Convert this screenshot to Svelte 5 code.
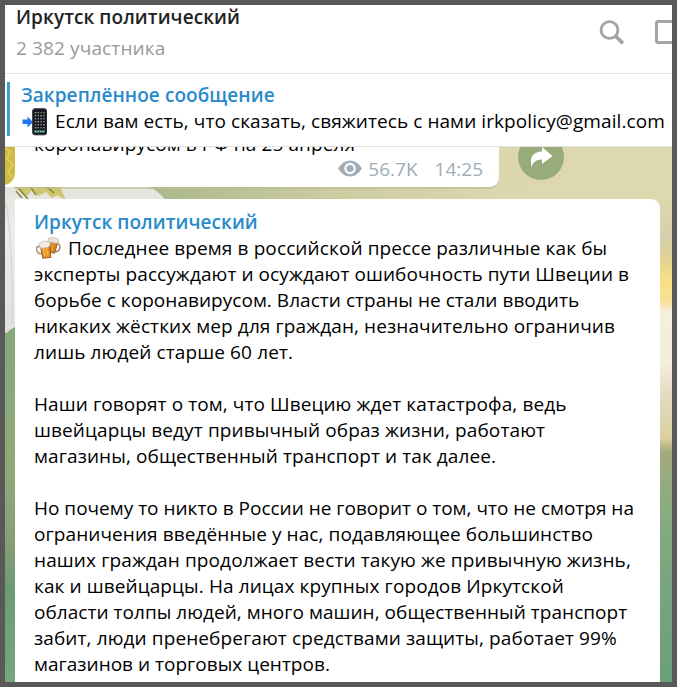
<script lang="ts">
	const channel = 'Иркутск политический';

	interface Line {
		text: string;
		tracking: number;
	}

	const paragraphs: Line[][] = [
		[
			{ text: 'Последнее время в российской прессе различные как бы', tracking: 0.115 },
			{ text: 'эксперты рассуждают и осуждают ошибочность пути Швеции в', tracking: 0.08 },
			{ text: 'борьбе с коронавирусом. Власти страны не стали вводить', tracking: 0.04 },
			{ text: 'никаких жёстких мер для граждан, незначительно ограничив', tracking: 0.1 },
			{ text: 'лишь людей старше 60 лет.', tracking: 0.12 }
		],
		[
			{ text: 'Наши говорят о том, что Швецию ждет катастрофа, ведь', tracking: 0.09 },
			{ text: 'швейцарцы ведут привычный образ жизни, работают', tracking: 0.12 },
			{ text: 'магазины, общественный транспорт и так далее.', tracking: 0.1 }
		],
		[
			{ text: 'Но почему то никто в России не говорит о том, что не смотря на', tracking: 0 },
			{ text: 'ограничения введённые у нас, подавляющее большинство', tracking: 0.09 },
			{ text: 'наших граждан продолжает вести такую же привычную жизнь,', tracking: 0.12 },
			{ text: 'как и швейцарцы. На лицах крупных городов Иркутской', tracking: 0.1 },
			{ text: 'области толпы людей, много машин, общественный транспорт', tracking: 0.04 },
			{ text: 'забит, люди пренебрегают средствами защиты, работает 99%', tracking: 0.11 },
			{ text: 'магазинов и торговых центров.', tracking: 0.02 }
		]
	];

	const appDots = [0, 1, 2, 3, 4, 5].flatMap((row) =>
		[0, 1, 2, 3].map((col) => ({
			x: 13.8 + col * 2.8,
			y: 4 + row * 3,
			color: ['#d5a64d', '#629bd0', '#c45c65', '#79b880', '#a974c5'][(row * 3 + col) % 5]
		}))
	);
</script>

<div class="window">
	<header class="header">
		<div>
			<h1 class="title">{channel}</h1>
			<p class="members">2 382 участника</p>
		</div>
		<div class="actions">
			<svg width="26" height="26" viewBox="0 0 26 26" fill="none" stroke="#a5a5a5">
				<circle cx="10.5" cy="10" r="8.4" stroke-width="2.9" />
				<path d="M16.8 16.3L24 23.3" stroke-width="3.7" />
			</svg>
			<svg width="17" height="25" viewBox="0 0 17 25" fill="none" stroke="#a5a5a5" stroke-width="3">
				<path d="M20 1.5H3Q1.5 1.5 1.5 3V21Q1.5 22.5 3 22.5H20" />
			</svg>
		</div>
	</header>

	<section class="pinned">
		<div class="pinned-bar"></div>
		<div class="pinned-content">
			<div class="pinned-title">Закреплённое сообщение</div>
			<div class="pinned-text">
				<svg width="26" height="28" viewBox="0 0 26 28">
					<path d="M1.5 11.5h5V8.5l5.5 5.5-5.5 5.5v-3.5h-5z" fill="#2375ed" />
					<rect x="11.7" y=".8" width="13.8" height="26" rx="2" fill="#161b22" stroke="#252b31" />
					{#each appDots as dot}
						<rect x={dot.x} y={dot.y} width="1.4" height="1.4" fill={dot.color} />
					{/each}
					<rect x="13" y="22" width="11" height="3" fill="#326653" />
					<path d="M14 23.5h9" stroke="#91dfb4" stroke-dasharray="1.5 1" />
				</svg>
				<span class="pinned-line">Если вам есть, что сказать, свяжитесь с нами irkpolicy@gmail.com</span>
			</div>
		</div>
	</section>

	<main class="chat">
		<svg class="wallpaper" viewBox="0 0 667 535" preserveAspectRatio="none">
			<defs>
				<linearGradient id="sky">
					<stop offset=".2" stop-color="#a9b68c" />
					<stop offset=".5" stop-color="#cdcda0" />
					<stop offset=".75" stop-color="#ddd7ae" />
					<stop offset="1" stop-color="#ded8af" />
				</linearGradient>
				<linearGradient id="left" x2="0" y2="1">
					<stop offset=".33" stop-color="#83a77b" />
					<stop offset=".58" stop-color="#91aa7a" />
					<stop offset=".73" stop-color="#899f75" />
					<stop offset=".82" stop-color="#6e9b76" />
					<stop offset="1" stop-color="#77a67d" />
				</linearGradient>
				<linearGradient id="right" gradientUnits="userSpaceOnUse" x1="0" y1="0" x2="0" y2="535">
					<stop offset=".1" stop-color="#ded8af" />
					<stop offset=".17" stop-color="#d5cfac" />
					<stop offset=".21" stop-color="#e1d394" />
					<stop offset=".25" stop-color="#f9df83" />
					<stop offset=".285" stop-color="#f8e092" />
					<stop offset=".31" stop-color="#f5efdf" />
					<stop offset=".4" stop-color="#f5eddd" />
					<stop offset=".46" stop-color="#e5dcc5" />
					<stop offset=".545" stop-color="#d9cf9f" />
					<stop offset=".57" stop-color="#a4aa7d" />
					<stop offset=".67" stop-color="#8aac81" />
					<stop offset=".82" stop-color="#77a57f" />
					<stop offset="1" stop-color="#6ba076" />
				</linearGradient>
				<linearGradient id="petal" x2="0" y2="1">
					<stop offset="0" stop-color="#e4e3dc" />
					<stop offset=".3" stop-color="#eeedeb" />
					<stop offset="1" stop-color="#e2e0df" />
				</linearGradient>
			</defs>
			<rect width="667" height="80" fill="url(#sky)" />
			<rect width="20" height="535" fill="url(#left)" />
			<rect x="645" y="52" width="22" height="483" fill="url(#right)" />
			<path d="M0 38H138Q153 42 161 54H10V180Q4 183 2 186L0 185Z" fill="url(#petal)" />
			<path d="M1 56C6 85 8 130 7 178" stroke="#d3d2d0" stroke-width="1" fill="none" />
			<path d="M0 0H11V37H8L0 40Z" fill="#cdbb45" />
			<path d="M1 1L5 5 2 12 8 18 3 24 7 31" stroke="#dfcb57" stroke-width="2" fill="none" />
			<path d="M8 40H55L61 53L52 48L47 51L41 45L33 49L27 43L22 49L15 44Z" fill="#cfc56a" />
			<path d="M14 42L23 52M26 41L31 48M42 40L49 46M11 44L17 51" stroke="#7f8a45" stroke-width="1.6" />
		</svg>

		<article class="bubble previous">
			<svg class="tail" width="12" height="14" viewBox="0 0 12 14"><path d="M10 0Q9 10 0 12V14H12V0Z" fill="white" /></svg>
			<p class="cut-line">коронавирусом в РФ на 25 апреля</p>
			<div class="meta">
				<svg width="24" height="18" viewBox="0 0 24 18">
					<path d="M0 8.5Q5 .5 12 .5T24 8.5Q19 16.5 12 16.5T0 8.5Z" fill="#a0adb6" />
					<circle cx="12" cy="8.5" r="4.6" fill="#a0adb6" stroke="white" stroke-width="2.2" />
				</svg>
				<span class="views">56.7K</span>
				<time>14:25</time>
			</div>
		</article>

		<button class="share" aria-label="Поделиться">
			<svg width="46" height="46" viewBox="0 0 46 46">
				<path d="M24 13L34.5 22L24 30V25.5Q16 25 13.5 33Q10 18 24 17.5Z" fill="white" />
			</svg>
		</button>

		<article class="bubble message">
			<div class="author">{channel}</div>
			{#each paragraphs as lines, p}
				<p class="paragraph">
					{#each lines as line, i}
						<span class="line" style="letter-spacing: {line.tracking}px">
							{#if p === 0 && i === 0}
								<svg class="beer" width="26" height="23" viewBox="0 0 26 23">
									<g transform="rotate(12 18 9)">
										<path d="M20 6q5 0 4 5-1 4-5 3" fill="none" stroke="#b28d6c" stroke-width="1.7" />
										<path d="M12 4h9l-1 12h-7z" fill="#d9821d" stroke="#94602f" />
										<path d="M14 6v8M17 6v8" stroke="#f1ac41" />
										<path d="M11 5q-1-3 2-3 1-2 4-1 4-1 5 3l-2 2H12z" fill="#ece4da" stroke="#b5a89d" stroke-width=".6" />
									</g>
									<g transform="rotate(-7 8 14)">
										<path d="M5 9Q0 8 1 13q1 4 5 3" fill="none" stroke="#ae9581" stroke-width="1.7" />
										<path d="M5 8h9v13H6z" fill="#e99520" stroke="#965923" />
										<path d="M8 10v9M11 10v9" stroke="#f7c24f" />
										<path d="M4 8q0-3 3-3 2-2 4 0 4-1 4 3l-2 3H5z" fill="#f3ece3" stroke="#b5a89d" stroke-width=".6" />
									</g>
								</svg>
							{/if}{line.text}
						</span>
					{/each}
				</p>
			{/each}
		</article>
	</main>
</div>

<style>
	:global(body) {
		margin: 0;
	}

	.window {
		box-sizing: border-box;
		display: flex;
		flex-direction: column;
		width: 677px;
		height: 687px;
		overflow: hidden;
		border: 5px solid #595959;
		background: white;
		color: #000;
		font-family: 'Open Sans', 'Noto Sans', sans-serif;
		font-size: 19px;
		line-height: 26px;
		white-space: nowrap;
	}

	h1,
	p {
		margin: 0;
	}

	.header {
		box-sizing: border-box;
		display: flex;
		justify-content: space-between;
		flex: 0 0 69px;
		padding-left: 11px;
		border-bottom: 1px solid #e3e3e3;
	}

	.title {
		margin-top: -1px;
		color: #222;
		font-size: 19px;
		font-weight: 600;
		letter-spacing: 0.08px;
	}

	.members {
		margin-top: 5px;
		color: #999;
		letter-spacing: 0.13px;
	}

	.actions {
		display: flex;
		gap: 30px;
		padding-top: 15px;
	}

	.pinned {
		box-sizing: border-box;
		display: flex;
		flex: 0 0 73px;
		padding: 8px 0 0 2px;
		border-bottom: 1px solid #dfe2df;
	}

	.pinned-bar {
		width: 3px;
		height: 54px;
		background: #3da0cf;
	}

	.pinned-content {
		margin-left: 11px;
	}

	.pinned-title,
	.author {
		color: #278acb;
		font-weight: 600;
		letter-spacing: 0.07px;
	}

	.pinned-text {
		display: flex;
		gap: 8px;
	}

	.pinned-line {
		letter-spacing: 0.08px;
	}

	.chat {
		position: relative;
		flex: 1;
		min-height: 0;
		overflow: hidden;
	}

	.wallpaper {
		position: absolute;
		inset: 0;
		width: 100%;
		height: 100%;
	}

	.bubble {
		position: relative;
		box-sizing: border-box;
		margin-left: 10px;
		background: white;
	}

	.previous {
		display: flow-root;
		width: 484px;
		height: 40px;
		border-radius: 0 0 9px 0;
		box-shadow: 0 2px 0 #b9bc9699;
	}

	.tail {
		position: absolute;
		bottom: 0;
		left: -10px;
	}

	/* scrolled halfway under the pinned bar */
	.cut-line {
		height: 26px;
		margin-top: -16px;
		padding-left: 19px;
		letter-spacing: 0.1px;
	}

	.meta {
		display: flex;
		align-items: center;
		justify-content: flex-end;
		height: 24px;
		padding-right: 16px;
		color: #a0acb6;
	}

	.views {
		margin: 0 17px 0 6px;
	}

	.share {
		position: absolute;
		top: -13px;
		left: 513px;
		width: 46px;
		height: 46px;
		padding: 0;
		border: 0;
		border-radius: 50%;
		background: #98ac7b;
	}

	.share svg {
		display: block;
	}

	.message {
		width: 645px;
		height: 500px;
		margin-top: 12px;
		padding: 10px 0 0 19px;
		border-radius: 0 9px 0 0;
	}

	.line {
		display: block;
	}

	.beer {
		margin: 0 6px 0 2px;
		vertical-align: -5px;
	}

	.paragraph + .paragraph {
		margin-top: 26px;
	}
</style>
